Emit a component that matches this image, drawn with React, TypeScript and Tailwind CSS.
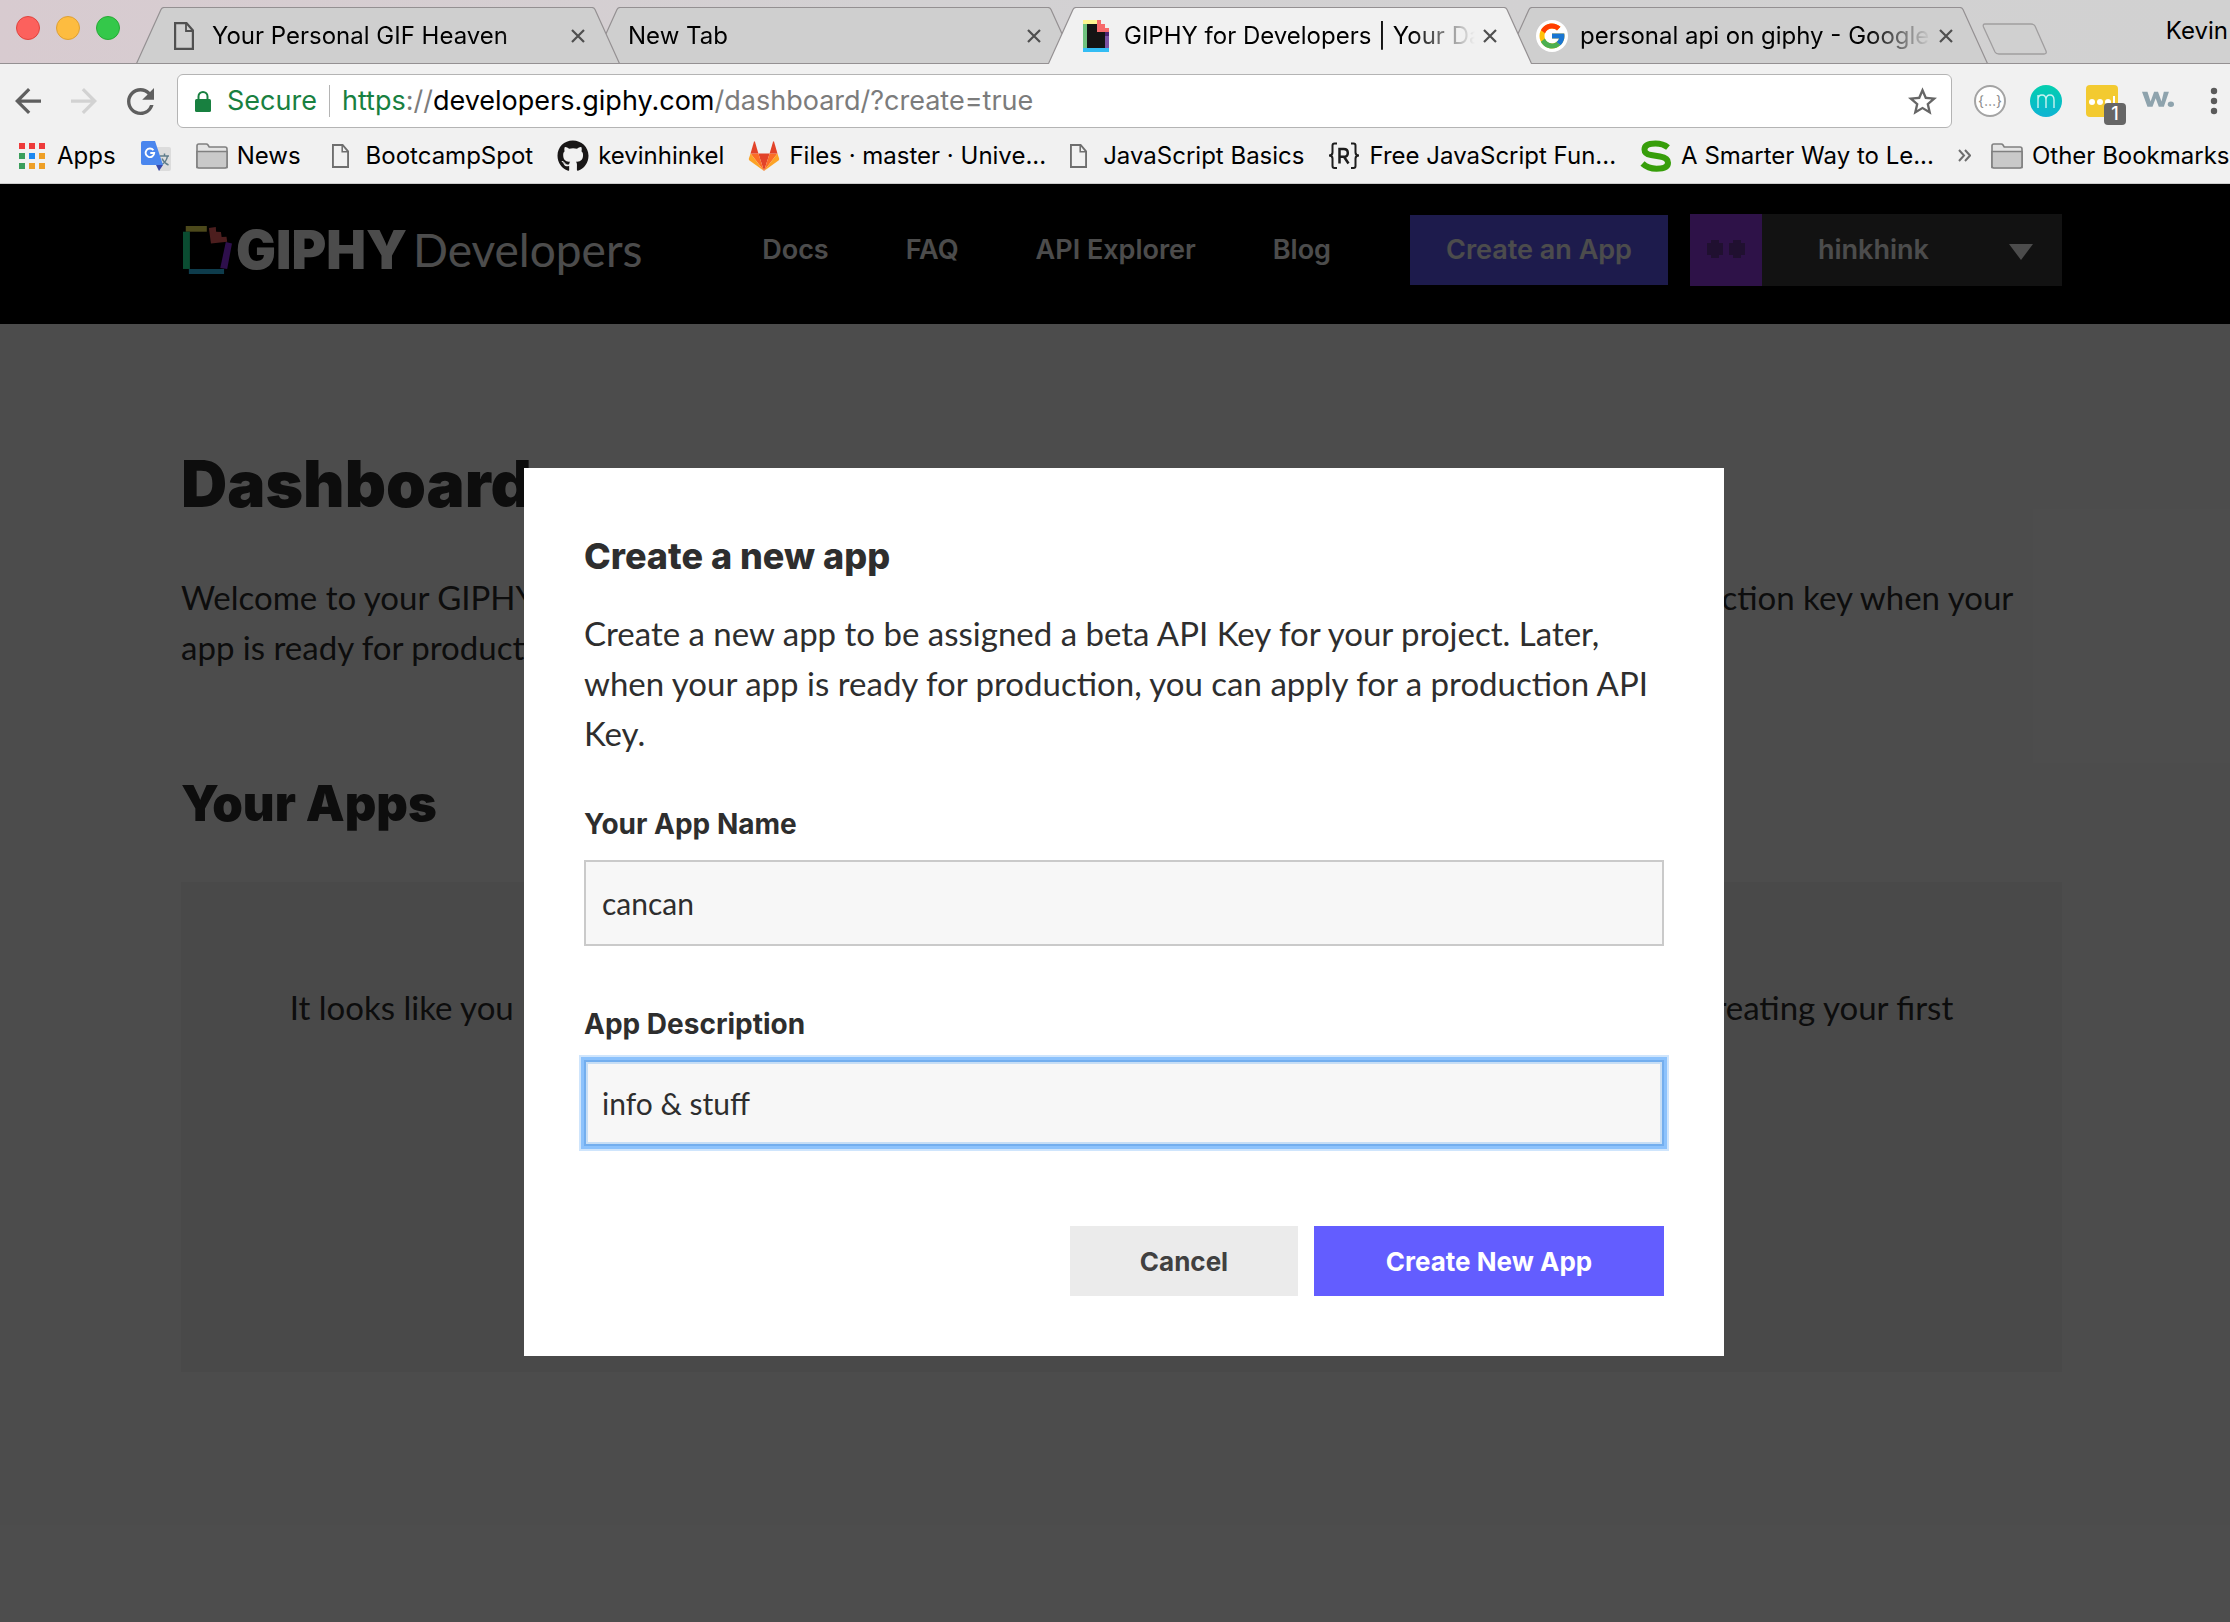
import React, { useState } from "react";
import { FaGithub } from "react-icons/fa";
import { FcGoogle } from "react-icons/fc";

/* ---------- small drawings ---------- */

const PageIcon = ({ className }: { className: string }) => (
  <svg viewBox="0 0 20 28" preserveAspectRatio="none" className={className} fill="none" stroke="currentColor" strokeWidth="2.2">
    <path d="M1.1 1.1h11.4l6.4 7.4v18.400H1.100z" />
    <path d="M12 1.500v7.500h6.500" strokeWidth="1.800" />
  </svg>
);

const FolderIcon = () => (
  <svg viewBox="0 0 32 26" className="h-[26px] w-8" fill="#c9c9c9" stroke="#808080" strokeWidth="1.600">
    <path d="M1 24.500V2.800Q1 1 2.800 1h7.400q1.200 0 1.800 1l1.200 2H29q2 0 2 2v18.500z" fill="#e4e4e4" />
    <path d="M1 8.500h30v14.500q0 2-2 2H3q-2 0-2-2z" />
  </svg>
);

const GiphyFavicon = () => (
  <svg viewBox="0 0 72 96" preserveAspectRatio="none" className="h-8 w-[26px]" shapeRendering="crispEdges">
    <path fill="#141414" d="M11 12h50v72H11z" />
    <path fill="#fdf38f" d="M0 0h39v12H0z" />
    <path fill="#6fc17d" d="M0 12h11v72H0z" />
    <path fill="#f76a6b" d="M39 0h11v12h11v12h11v12H39z" />
    <path fill="#4d2472" d="M61 36h11v12H61z" />
    <path fill="#7c52a3" d="M61 48h11v36H61z" />
    <path fill="#33bdf4" d="M0 84h72v12H0z" />
  </svg>
);

const CloseIcon = () => (
  <svg viewBox="0 0 14 14" className="size-3.5" stroke="#4f4f4f" strokeWidth="2.200">
    <path d="M1 1l12 12M13 1L1 13" />
  </svg>
);

const AppsIcon = () => {
  const colors = ["#ee3b3b", "#ee3b3b", "#ee3b3b", "#3a9e5c", "#1e88f0", "#ee9f26", "#3a9e5c", "#ee9f26", "#ee9f26"];
  return (
    <svg viewBox="0 0 26 26" className="size-[26px]">
      {colors.map((c, i) => (
        <rect key={i} x={(i % 3) * 10} y={Math.floor(i / 3) * 10} width="6" height="6" fill={c} />
      ))}
    </svg>
  );
};

const TranslateIcon = () => (
  <svg viewBox="0 0 30 30" className="size-[30px]">
    <path d="M12 6h16q2 0 2 2v20q0 2-2 2H18z" fill="#dcdcdc" />
    <path d="M19 15h9M23.500 12.500V15M20 24q5.500-3 6.500-9M21 17.500q2 4.500 6.500 6.500" stroke="#607d8b" strokeWidth="1.500" fill="none" />
    <path d="M15 24h7l-4 6z" fill="#3949ab" />
    <path d="M2 0h12l8 24H2q-2 0-2-2V2q0-2 2-2z" fill="#4a86ee" />
    <path d="M12.400 9.300A4.300 4.300 0 1 0 13.200 12H9.300" stroke="#fff" strokeWidth="1.900" fill="none" />
  </svg>
);

const GitlabIcon = () => (
  <svg viewBox="0 0 89 88" className="h-[30px] w-8">
    <path fill="#e24329" d="M44.500 88 61 37H28z" />
    <path fill="#fc6d26" d="M44.500 88 28 37H5z" />
    <path fill="#fca326" d="M5 37 0 52q-.6 3 2 5l42.500 31z" />
    <path fill="#e24329" d="M5 37h23L18 2q-1.500-3-3 0z" />
    <path fill="#fc6d26" d="M44.500 88 61 37h23z" />
    <path fill="#fca326" d="m84 37 5 15q.6 3-2 5L44.500 88z" />
    <path fill="#e24329" d="M84 37H61L71 2q1.500-3 3 0z" />
  </svg>
);

const BracesR = () => (
  <svg viewBox="0 0 32 30" className="h-[30px] w-8" fill="none" stroke="#1d1d1d" strokeWidth="2">
    <path d="M9 2.500H6.500Q4.500 2.500 4.500 4.500v7q0 3-3.500 3 3.500 0 3.500 3v7.500q0 2 2 2H9" />
    <path d="M23 2.500h2.500q2 0 2 2v7q0 3 3.500 3-3.500 0-3.500 3v7.500q0 2-2 2H23" />
    <path d="M11.500 22.500V8h4.300q4 0 4 3.900t-4 3.900h-4M16 15.800l4.500 6.700" strokeWidth="2.500" />
  </svg>
);

const GreenS = () => (
  <svg viewBox="0 0 32 32" className="size-8" fill="none" stroke="#379e0a" strokeWidth="6">
    <path d="M28 7.500Q23 3.500 15.500 3.500 4.500 3.500 4.500 9.500q0 4.500 6.500 5.500l9 1.500q8 1.300 8 6.200 0 6-11.500 6Q8 28.700 2.500 23.500" />
  </svg>
);

/* ---------- browser window ---------- */

function Tab({ title, icon, active, layer }: { title: string; icon?: React.ReactNode; active?: boolean; layer: string }) {
  const fill = active ? "#f1f1f1" : "#cfcfcf";
  return (
    <div role="tab" aria-selected={!!active} className={`relative -ml-7 flex h-[57px] max-w-[484px] min-w-0 flex-1 first:ml-0 ${layer}`}>
      <svg viewBox="0 0 28 57" className="h-[57px] w-7 shrink-0">
        <path d="M0 57 25 2.500Q26 .5 28 .5V57z" fill={fill} />
        <path d="M.3 57 25 2.500Q26 .5 28 .5" fill="none" stroke="#949092" strokeWidth="1.200" />
        {!active && <path d="M0 56.500h28" stroke="#949092" />}
      </svg>
      <div
        className={`flex min-w-0 flex-1 items-center gap-2 border-t border-t-[#949092] pr-[7px] pl-1 ${
          active ? "bg-[#f1f1f1]" : "border-b border-b-[#949092] bg-[#cfcfcf]"
        }`}
      >
        {icon && <span className="mr-1 flex w-8 shrink-0 justify-center text-[#505050]">{icon}</span>}
        <span
          className={`min-w-0 flex-1 overflow-hidden text-2xl whitespace-nowrap mask-r-from-[calc(100%-64px)] mask-r-to-100% ${
            icon ? "" : "pl-1"
          }`}
        >
          {title}
        </span>
        <button aria-label="Close tab" className="shrink-0">
          <CloseIcon />
        </button>
      </div>
      <svg viewBox="0 0 28 57" className="h-[57px] w-7 shrink-0">
        <path d="M28 57 3 2.500Q2 .5 0 .5V57z" fill={fill} />
        <path d="M27.700 57 3 2.500Q2 .5 0 .5" fill="none" stroke="#949092" strokeWidth="1.200" />
        {!active && <path d="M0 56.500h28" stroke="#949092" />}
      </svg>
    </div>
  );
}

function TabStrip() {
  return (
    <div className="flex h-16 items-end border-b border-[#949092] bg-linear-to-r from-[#d8cbd0] via-[#d3d1d3] via-40% to-[#d1d1d1]">
      <div className="mt-4 mr-4 ml-4 flex gap-4 self-start">
        <button aria-label="Close window" className="size-6 rounded-full border border-[#e0443e] bg-[#fc615d]" />
        <button aria-label="Minimize window" className="size-6 rounded-full border border-[#dea034] bg-[#fdbc40]" />
        <button aria-label="Zoom window" className="size-6 rounded-full border border-[#27aa35] bg-[#34c84a]" />
      </div>
      <div role="tablist" className="-mb-px flex min-w-0 flex-1">
        <Tab title="Your Personal GIF Heaven" icon={<PageIcon className="h-7 w-5" />} layer="z-30" />
        <Tab title="New Tab" layer="z-20" />
        <Tab title="GIPHY for Developers | Your Dashboard" icon={<GiphyFavicon />} active layer="z-40" />
        <Tab
          title="personal api on giphy - Google Search"
          icon={
            <span className="flex size-8 items-center justify-center rounded-full bg-white">
              <FcGoogle className="size-[30px]" />
            </span>
          }
          layer="z-10"
        />
        <button aria-label="New tab" className="-ml-1.5 self-start pt-4">
          <svg viewBox="0 0 66 32" className="h-8 w-[66px]">
            <path d="M3 1h46q3 0 4 2l11 25q1 3-2 3H17q-3 0-4-2L1.500 4Q.5 1 3 1z" fill="#d0d0d0" stroke="#a09e9f" strokeWidth="1.300" />
          </svg>
        </button>
      </div>
      <span className="mb-4 pr-0.5 text-2xl">Kevin</span>
    </div>
  );
}

function Toolbar() {
  return (
    <div className="flex items-center bg-[#f1f1f1] pt-2.5 pr-2 pl-[15px]">
      <button aria-label="Back" className="mr-[30px] shrink-0">
        <svg viewBox="4 4 16 16" className="size-[26px]" fill="#5f5f5f">
          <path d="M20 11H7.830l5.590-5.590L12 4l-8 8 8 8 1.410-1.410L7.830 13H20v-2z" />
        </svg>
      </button>
      <button aria-label="Forward" className="mr-[30px] shrink-0">
        <svg viewBox="4 4 16 16" className="size-[26px]" fill="#d2d2d2">
          <path d="M12 4l-1.410 1.410L16.170 11H4v2h12.170l-5.580 5.590L12 20l8-8z" />
        </svg>
      </button>
      <button aria-label="Reload" className="mr-[23px] shrink-0">
        <svg viewBox="4 4 16 16" className="size-[27px]" fill="#5f5f5f">
          <path d="M17.650 6.350A7.958 7.958 0 0012 4c-4.420 0-7.990 3.580-7.990 8s3.570 8 7.990 8c3.730 0 6.840-2.550 7.730-6h-2.080A5.990 5.990 0 0112 18c-3.310 0-6-2.690-6-6s2.690-6 6-6c1.660 0 3.140.69 4.220 1.780L13 11h7V4l-2.350 2.350z" />
        </svg>
      </button>
      <div className="flex h-[54px] min-w-0 flex-1 items-center rounded-md border border-[#b4b4b4] bg-white pr-3.5 pl-[17px] text-[27px] whitespace-nowrap">
        <svg viewBox="0 0 16 21" className="h-[21px] w-4 shrink-0" fill="#188040">
          <rect y="8" width="16" height="13" rx="1.500" />
          <path d="M3.500 9V5.500a4.500 4.500 0 0 1 9 0V9" fill="none" stroke="#188040" strokeWidth="2" />
        </svg>
        <span className="ml-4 text-[#188040]">Secure</span>
        <span className="mx-3 h-8 w-px bg-[#b4b4b4]" />
        <span className="flex-1 text-[#7c7c7c]">
          <span className="text-[#188040]">https</span>://<span className="text-black">developers.giphy.com</span>/dashboard/?create=true
        </span>
        <button aria-label="Bookmark this page">
          <svg viewBox="2 2 20 19" className="h-7 w-[29px]" fill="#666">
            <path d="M22 9.240l-7.190-.62L12 2 9.190 8.630 2 9.240l5.460 4.730L5.820 21 12 17.270 18.180 21l-1.630-7.030L22 9.240zM12 15.400l-3.760 2.270 1-4.280-3.320-2.880 4.380-.38L12 6.100l1.710 4.040 4.380.38-3.320 2.880 1 4.280L12 15.400z" />
          </svg>
        </button>
      </div>
      <div className="ml-[22px] flex items-center gap-6">
        <button aria-label="JSON viewer" className="flex size-8 items-center justify-center rounded-full border-2 border-[#a3a3a3] bg-white text-sm text-[#8a8a8a]">
          {"{…}"}
        </button>
        <button aria-label="Momentum" className="flex size-8 items-center justify-center rounded-full bg-linear-to-b from-[#06cfae] to-[#10b3d3]">
          <svg viewBox="0 0 18 14" className="h-3.5 w-[18px]" fill="none" stroke="#c9f3f1" strokeWidth="1.400">
            <path d="M1 14V1M1 6q0-5 4-5t4 5v8M9 6q0-5 4-5t4 5v8" />
          </svg>
        </button>
        <button aria-label="Password manager, 1 login" className="relative flex size-8 items-center rounded bg-[#f3ca30] pl-[3px]">
          <svg viewBox="0 0 28 14" className="h-3.5 w-7" fill="#fff">
            <circle cx="3" cy="8" r="3" />
            <circle cx="11" cy="8" r="3" />
            <circle cx="19" cy="8" r="3" />
            <path d="M24 2h2v9h-2z" />
          </svg>
          <span className="absolute top-[18px] left-[18px] flex h-[22px] w-[22px] items-center justify-center rounded-sm bg-[#666] text-lg font-medium text-white">
            1
          </span>
        </button>
        <button aria-label="Wappalyzer" className="flex h-8 w-8 items-center">
          <svg viewBox="0 0 82 50" className="-mt-1 h-[17px] w-8" preserveAspectRatio="none">
            <path d="M0 2h14l8 29 9-29h10l9 29 6-29h13L56 46H43l-8-25-8 25H14z" fill="#8ea3ad" />
            <circle cx="74" cy="39" r="8" fill="#8ea3ad" />
          </svg>
        </button>
      </div>
      <button aria-label="Menu" className="ml-8">
        <svg viewBox="0 0 16 28" className="h-7 w-4" fill="#5a5a5a">
          <circle cx="8" cy="4" r="3.200" />
          <circle cx="8" cy="14" r="3.200" />
          <circle cx="8" cy="24" r="3.200" />
        </svg>
      </button>
    </div>
  );
}

function Bookmark({ icon, label, name, tight }: { icon: React.ReactNode; label?: string; name?: string; tight?: boolean }) {
  return (
    <a href="#" aria-label={name} className={`flex shrink-0 items-center gap-[9px] ${tight ? "-mr-2" : ""}`}>
      <span className="flex w-8 justify-center text-[#6e6e6e]">{icon}</span>
      {label}
    </a>
  );
}

function BookmarksBar() {
  return (
    <nav aria-label="Bookmarks" className="flex h-14 items-center gap-6 overflow-hidden border-b border-[#cdcdcd] bg-[#f1f1f1] pl-4 text-2xl whitespace-nowrap">
      <Bookmark icon={<AppsIcon />} label="Apps" />
      <Bookmark icon={<TranslateIcon />} name="Translate" />
      <Bookmark icon={<FolderIcon />} label="News" />
      <Bookmark icon={<PageIcon className="h-6 w-[17px]" />} label="BootcampSpot" />
      <Bookmark icon={<FaGithub className="size-8 text-[#191717]" />} label="kevinhinkel" />
      <Bookmark icon={<GitlabIcon />} label="Files · master · Unive..." tight />
      <Bookmark icon={<PageIcon className="h-6 w-[17px]" />} label="JavaScript Basics" />
      <Bookmark icon={<BracesR />} label="Free JavaScript Fun..." />
      <Bookmark icon={<GreenS />} label="A Smarter Way to Le..." />
      <button aria-label="More bookmarks" className="-mr-1 shrink-0">
        <svg viewBox="0 0 13 13" className="size-[13px]" fill="none" stroke="#6e6e6e" strokeWidth="2">
          <path d="M1 1l5 5.500L1 12M7 1l5 5.500L7 12" />
        </svg>
      </button>
      <Bookmark icon={<FolderIcon />} label="Other Bookmarks" />
    </nav>
  );
}

/* ---------- developer site ---------- */

function GiphyMark() {
  return (
    <svg viewBox="67 112 142 143" preserveAspectRatio="none" className="h-12 w-[49px]">
      <path fill="#fff35c" d="M75 112h61v17H75z" />
      <path fill="#22ffa3" d="M67 129h20v111H67z" />
      <path fill="#ff6666" d="M142 118l20-3 1 14 14 1 2 15 14-1 2 15-47 5z" />
      <path fill="#9933ff" d="M191 160l18 4-14 76-20-3z" />
      <path fill="#30c8ff" d="M84 240h102v15H84z" />
    </svg>
  );
}

function SiteHeader() {
  return (
    <header className="flex h-[140px] items-center bg-black pr-[168px] pb-2 pl-[183px] text-[27px] font-semibold text-white">
      <a href="#" className="flex items-center whitespace-nowrap">
        <GiphyMark />
        <span className="ml-1 text-[53px] leading-[60px] font-black">GIPHY</span>
        <span className="ml-1.5 font-['Lato',sans-serif] text-[46px] leading-[60px] font-normal">Developers</span>
      </a>
      <nav className="ml-auto flex gap-[77px] whitespace-nowrap">
        <a href="#">Docs</a>
        <a href="#">FAQ</a>
        <a href="#">API Explorer</a>
        <a href="#">Blog</a>
      </nav>
      <button className="ml-[79px] h-[70px] w-[258px] bg-[#635dff] whitespace-nowrap">Create an App</button>
      <button className="ml-[22px] flex h-[72px] w-[372px] items-center bg-[#3c3c3c]">
        <span className="flex h-full w-[72px] items-center justify-center bg-[#993cf0]">
          <svg viewBox="0 0 38 18" className="-mt-0.5 h-[18px] w-[38px]" fill="#6c38a0">
            <path d="M4 0h8v3h4v12h-4v3H4v-3H0V3h4zM26 0h8v3h4v12h-4v3h-8v-3h-4V3h4z" />
          </svg>
        </span>
        <span className="flex-1 pl-2 text-center">hinkhink</span>
        <svg viewBox="0 0 24 16" className="mt-1 mr-[29px] ml-8 h-4 w-6" fill="#fff">
          <path d="M0 0h24L12 16z" />
        </svg>
      </button>
    </header>
  );
}

function Dashboard() {
  return (
    <main className="pt-[120px] pr-[168px] pl-[181px] text-[#2e2e2e]">
      <h1 className="text-[64px] leading-20 font-black">Dashboard</h1>
      <p className="mt-12 font-['Lato',sans-serif] text-[33px] leading-[50px]">
        Welcome to your GIPHY Dashboard. Create an app to get a beta key for your project, and apply for a production key when your
        <br />
        app is ready for production.
      </p>
      <h2 className="mt-[102px] text-[49px] leading-[60px] font-black">Your Apps</h2>
      <section className="mt-12 bg-[#f4f4f4] px-12 pt-[100px] pb-[170px] text-center">
        <p className="font-['Lato',sans-serif] text-[33px] leading-[50px]">
          It looks like you haven’t created any apps yet. You can also get started with a beta API key now by creating your first
          <br />
          app.
        </p>
        <button className="mt-[50px] h-[70px] w-[258px] bg-[#635dff] text-[27px] font-semibold text-white">Create an App</button>
      </section>
    </main>
  );
}

function CreateAppDialog() {
  const [name, setName] = useState("cancan");
  const [description, setDescription] = useState("info & stuff");
  return (
    <div role="dialog" aria-modal="true" aria-labelledby="dialog-title" className="w-[1200px] bg-white p-15 text-[#2e2e2e]">
      <h2 id="dialog-title" className="text-4xl leading-14 font-extrabold">
        Create a new app
      </h2>
      <p className="mt-6 font-['Lato',sans-serif] text-[33px] leading-[50px]">
        Create a new app to be assigned a beta API Key for your project. Later, when your app is ready for production, you can apply for a
        production API Key.
      </p>
      <form className="mt-[46px]" onSubmit={(e) => e.preventDefault()}>
        <div className="flex flex-col gap-[58px]">
          <div>
            <label htmlFor="app-name" className="block text-[28px] leading-10 font-bold">
              Your App Name
            </label>
            <input
              id="app-name"
              value={name}
              onChange={(e) => setName(e.target.value)}
              className="mt-4 block h-[86px] w-full border-2 border-[#cacaca] bg-[#f7f7f7] px-4 font-['Lato',sans-serif] text-[30px] outline-none"
            />
          </div>
          <div>
            <label htmlFor="app-description" className="block text-[28px] leading-10 font-bold">
              App Description
            </label>
            <input
              id="app-description"
              value={description}
              onChange={(e) => setDescription(e.target.value)}
              className="mt-4 block h-[86px] w-full border-2 border-[#73aeee] bg-[#f7f7f7] px-4 font-['Lato',sans-serif] text-[30px] shadow-[0_0_0_3px_#8cc2fc,0_0_0_5px_#cfe5fc,inset_0_0_0_2px_#c7def5] outline-none"
            />
          </div>
        </div>
        <div className="mt-20 flex justify-end gap-4 text-[26px] font-bold">
          <button type="button" className="h-[70px] w-[228px] bg-[#ebebeb] text-[#404040]">
            Cancel
          </button>
          <button type="submit" className="h-[70px] w-[350px] bg-[#635dff] text-white">
            Create New App
          </button>
        </div>
      </form>
    </div>
  );
}

export default function App() {
  return (
    <div className="flex min-h-screen flex-col overflow-hidden bg-white font-['Inter',sans-serif] text-black">
      <TabStrip />
      <Toolbar />
      <BookmarksBar />
      <div className="relative flex-1">
        <SiteHeader />
        <Dashboard />
        <div className="absolute inset-0 flex items-start justify-center bg-black/70 pt-[284px] pl-[18px]">
          <CreateAppDialog />
        </div>
      </div>
    </div>
  );
}
